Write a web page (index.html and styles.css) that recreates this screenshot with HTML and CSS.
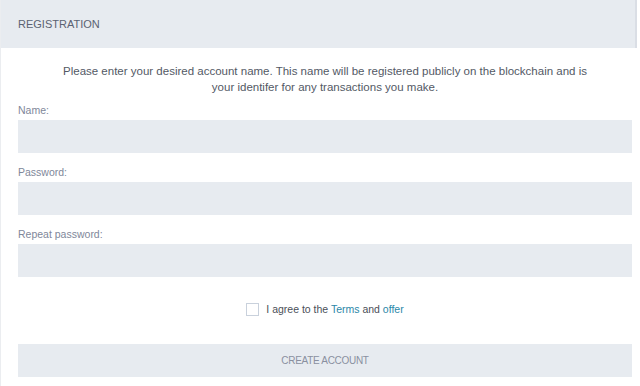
FILE: index.html
```html
<!DOCTYPE html>
<html lang="en">
<head>
<meta charset="utf-8"/>
<meta content="width=device-width, initial-scale=1.0" name="viewport"/>
<title>Registration</title>
<link rel="stylesheet" href="styles.css">
</head>
<body>
<div class="panel">
  <header class="panel-head">REGISTRATION</header>
  <form class="panel-body">
    <p class="intro">Please enter your desired account name. This name will be registered publicly on the blockchain and is your identifer for any transactions you make.</p>
    <div class="field">
      <label for="name">Name:</label>
      <input id="name" type="text"/>
    </div>
    <div class="field">
      <label for="pass">Password:</label>
      <input id="pass" type="password"/>
    </div>
    <div class="field">
      <label for="pass2">Repeat password:</label>
      <input id="pass2" type="password"/>
    </div>
    <div class="agree">
      <input id="agree" type="checkbox"/>
      <label for="agree">I agree to the <a href="#">Terms</a> and <a href="#">offer</a></label>
    </div>
    <button class="submit" type="button">CREATE ACCOUNT</button>
  </form>
</div>
</body>
</html>
```

FILE: styles.css
```css
body { margin: 0; padding: 0; background: #fff; font-family: "Liberation Sans", Arial, sans-serif; color: #555b66; }
.panel { width: 637px; min-height: 386px; border-left: 1px solid #ebedf0; box-sizing: border-box; }
.panel-head {
  height: 48px;
  line-height: 48px;
  padding-left: 17px;
  background: #e7ebf0;
  border-right: 2px solid #dadee5;
  font-size: 11px;
  color: #5b6272;
}
.panel-body { padding: 15px 5px 0 17px; }
.intro { max-width: 548px; margin: 0 auto 8px; text-align: center; font-size: 11.5px; line-height: 16px; color: #535965; }
.field { margin-bottom: 12px; }
.field label { display: block; height: 14px; line-height: 14px; margin-bottom: 3px; font-size: 10.5px; color: #80879a; }
.field input {
  display: block;
  width: 100%;
  height: 33px;
  box-sizing: border-box;
  border: none;
  background: #e7ebf0;
  outline: none;
}
.agree { display: flex; align-items: center; justify-content: center; gap: 7px; height: 20px; margin-top: 22px; font-size: 10.5px; color: #4a4f58; }
.agree input {
  appearance: none;
  width: 13px;
  height: 13px;
  margin: 0;
  border: 1px solid #c9d1dc;
  background: #fff;
}
.agree a { color: #2b87a8; text-decoration: none; }
.submit {
  display: block;
  width: 100%;
  height: 33px;
  margin-top: 25px;
  border: none;
  background: #e7ebf0;
  font-family: inherit;
  font-size: 10px;
  letter-spacing: -0.3px;
  color: #8a90a0;
  cursor: pointer;
}
```
